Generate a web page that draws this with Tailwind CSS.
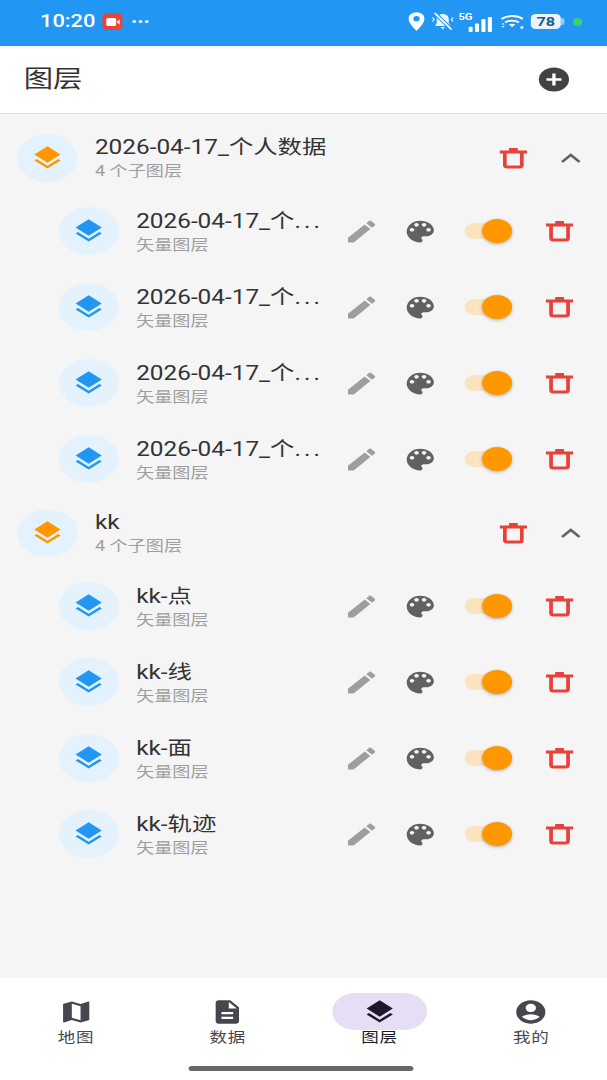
<!DOCTYPE html>
<html lang="zh">
<head>
  <meta charset="UTF-8">
  <meta name="viewport" content="width=device-width, initial-scale=1.0">
  <title>图层</title>
  <script src="https://cdn.jsdelivr.net/npm/@tailwindcss/browser@4"></script>
</head>
<body class="bg-white overflow-hidden">
  <!-- the capture is stretched sideways, so the whole app is laid out narrow and scaled -->
  <div class="w-[486px] h-[1080px] origin-top-left scale-x-[1.249] flex flex-col font-[Roboto,'Noto_Sans_CJK_SC',sans-serif] text-[#333]">
    <div class="h-[46px] shrink-0 bg-[#2196f3] flex items-center pl-[32px] pr-[20px] pb-[3px] text-white">
      <span class="text-[17.5px] font-medium leading-none w-[44px]">10:20</span>
      <span class="ml-[6px] w-[16px] h-[17px] rounded-[4px] bg-[#ef4136] flex items-center justify-center">
        <svg width="11" height="8" viewBox="0 0 11 8"><rect width="8" height="8" rx="1.5" fill="#fff"/><path d="M8.5 3.5L11 1.5v5L8.5 4.5z" fill="#fff"/></svg>
      </span>
      <span class="ml-[8px] flex gap-[2px]"><i class="w-[3px] h-[3px] rounded-full bg-white/90"></i><i class="w-[3px] h-[3px] rounded-full bg-white/90"></i><i class="w-[3px] h-[3px] rounded-full bg-white/90"></i></span>
      <div class="ml-auto flex items-center">
        <svg width="13" height="19" viewBox="0 0 14 20" fill="#fff"><path fill-rule="evenodd" d="M7 0C3.1 0 0 3.1 0 7c0 5 7 13 7 13s7-8 7-13c0-3.900-3.100-7-7-7zm0 4.200a2.800 2.800 0 110 5.600 2.800 2.800 0 010-5.600z"/></svg>
        <svg class="ml-[5px]" width="19" height="19" viewBox="0 0 19 18" fill="#fff" fill-opacity=".92"><path d="M9.500 1.500c-3 0-4.800 2.300-4.800 5.200v3.800L3.300 13.500h12.400l-1.400-3V6.700c0-2.900-1.800-5.200-4.800-5.200zM7.800 14.500h3.400l-1.700 2.500z"/><path d="M3 .5L16.500 17" stroke="#2196f3" stroke-width="3.500"/><path d="M3 .5L16.500 17" stroke="#fff" stroke-width="1.600"/><path d="M1.200 5l1.500 2-1.500 2M17.800 5l-1.500 2 1.500 2" fill="none" stroke="#fff" stroke-width="1"/></svg>
        <div class="ml-[3px] relative w-[27px] h-[20px]">
          <span class="absolute left-0 top-0 text-[9px] font-bold leading-[10px]">5G</span>
          <svg class="absolute right-0 bottom-0" width="19" height="15" viewBox="0 0 20 16" fill="#fff"><rect x="0" y="10.500" width="3.500" height="5.500" rx=".8"/><rect x="5.500" y="7" width="3.500" height="9" rx=".8"/><rect x="11" y="2" width="3.500" height="14" rx=".8"/><rect x="16.500" y="0" width="3.500" height="16" rx=".8"/></svg>
        </div>
        <svg class="ml-[6px]" width="20" height="15" viewBox="0 0 20 15" fill="none" stroke="#fff" stroke-width="1.800"><path d="M1.500 5C6 1 14 1 18.500 5"/><path d="M4.500 8.500c3-2.600 8-2.600 11 0"/><path d="M10 13l-2.600-2.400c1.500-1 3.700-1 5.200 0z" fill="#fff" stroke="none"/><path d="M1.500 10.500l1.300-1.500 1.300 1.500zM1.500 12h2.600l-1.300 1.500zM16.500 13.500a1.300 1.300 0 102.600 0 1.300 1.300 0 10-2.600 0" fill="#fff" stroke="none"/></svg>
        <div class="ml-[5px] flex items-center">
          <span class="w-[24px] h-[15px] rounded-[4px] bg-[#eaf4fe] text-[#1f5c94] text-[13px] font-bold leading-[15px] text-center">78</span>
          <span class="w-[3px] h-[7px] rounded-r-[2px] bg-white/50"></span>
        </div>
        <span class="ml-[7px] w-[7px] h-[8px] rounded-full bg-[#3ed06d]"></span>
      </div>
    </div>

    <div class="h-[68px] shrink-0 bg-white border-b border-[#e0e0e0] flex items-center justify-between pl-[19px] pr-[28px]">
      <span class="text-[23.5px] leading-none">图层</span>
      <svg width="29" height="29" viewBox="0 0 24 24"><circle cx="12" cy="12" r="10" fill="#424242"/><path d="M12 7v10M7 12h10" stroke="#fff" stroke-width="2.200"/></svg>
    </div>

    <div id="list" class="flex-1 bg-[#f5f5f5] pt-[8px]"></div>

    <div class="h-[102px] shrink-0 bg-white relative">
      <div id="nav" class="grid grid-cols-4 pt-[15px]"></div>
      <div class="absolute left-[151px] top-[88px] w-[180px] h-[5px] rounded-full bg-[#666]"></div>
    </div>
  </div>

  <script>
    const icons = {
      layers: 'M11.990 18.540l-7.370-5.730L3 14.070l9 7 9-7-1.630-1.270-7.380 5.740zM12 16l7.360-5.730L21 9l-9-7-9 7 1.630 1.270L12 16z',
      edit: 'M3 17.250V21h3.750L17.810 9.940l-3.750-3.750L3 17.250zM20.710 7.040c.39-.39.39-1.020 0-1.410l-2.340-2.340c-.39-.39-1.020-.39-1.410 0l-1.830 1.830 3.750 3.750 1.830-1.830z',
      palette: 'M12 3c-4.970 0-9 4.030-9 9s4.030 9 9 9c.83 0 1.500-.67 1.500-1.500 0-.39-.15-.74-.39-1.010-.23-.26-.38-.61-.38-.99 0-.83.67-1.500 1.500-1.500H16c2.760 0 5-2.240 5-5 0-4.420-4.030-8-9-8zm-5.500 9c-.83 0-1.500-.67-1.500-1.500S5.670 9 6.500 9 8 9.670 8 10.500 7.330 12 6.500 12zm3-4C8.670 8 8 7.330 8 6.500S8.670 5 9.500 5s1.500.67 1.500 1.500S10.330 8 9.500 8zm5 0c-.83 0-1.500-.67-1.500-1.500S13.670 5 14.500 5s1.500.67 1.500 1.500S15.330 8 14.500 8zm3 4c-.83 0-1.500-.67-1.500-1.500S16.670 9 17.500 9s1.500.67 1.500 1.500-.67 1.500-1.500 1.500z',
      map: 'M20.500 3l-.16.030L15 5.100 9 3 3.360 4.900c-.21.07-.36.25-.36.48V20.500c0 .28.22.5.5.5l.16-.03L9 18.900l6 2.100 5.640-1.900c.21-.07.36-.25.36-.48V3.500c0-.28-.22-.5-.5-.5zM15 19l-6-2.110V5l6 2.110V19z',
      doc: 'M14 2H6c-1.100 0-2 .9-2 2v16c0 1.100.9 2 2 2h12c1.100 0 2-.9 2-2V8l-6-6zm2 16H8v-2h8v2zm0-4H8v-2h8v2zm-3-5V3.500L18.500 9H13z',
      user: 'M12 2C6.480 2 2 6.480 2 12s4.480 10 10 10 10-4.480 10-10S17.520 2 12 2zm0 3c1.930 0 3.500 1.570 3.500 3.500S13.930 12 12 12s-3.500-1.570-3.500-3.500S10.070 5 12 5zm0 14c-2.030 0-4.430-.82-6.140-2.880C7.550 14.800 9.680 14 12 14s4.450.8 6.140 2.120C16.430 18.180 14.030 19 12 19z'
    };
    const svg = (name, size, color) => `<svg width="${size}" height="${size}" viewBox="0 0 24 24" fill="${color}"><path d="${icons[name]}"/></svg>`;
    const trash = `<svg width="22" height="22" viewBox="0 0 22 22" fill="none" stroke="#e8413a" stroke-width="3"><path d="M0 5h22"/><path d="M7.500 1h7v3h-7z" fill="#e8413a" stroke="none"/><path d="M4.200 5v13c0 1.300.7 2 2 2h9.600c1.300 0 2-.7 2-2V5"/></svg>`;

    const badge = color => `<div class="w-[48px] h-[48px] rounded-full bg-[#e3f2fd] flex items-center justify-center shrink-0">${svg('layers', 28, color)}</div>`;

    function groupRow(name, count) {
      return `<div class="h-[71px] flex items-center pl-[14px]">
        ${badge('#ff9800')}
        <div class="ml-[14px] w-[280px] pt-[2px]">
          <div class="text-[19.5px] leading-[26px]">${name}</div>
          <div class="mt-[1px] text-[14.5px] leading-[20px] text-[#9e9e9e]">${count}</div>
        </div>
        <div class="absolute left-[400px] w-[22px]">${trash}</div>
        <svg class="absolute left-[448px]" width="18" height="12" viewBox="0 0 18 12" fill="none" stroke="#616161" stroke-width="2.400"><path d="M2 10l7-7 7 7"/></svg>
      </div>`;
    }

    function childRow(name) {
      return `<div class="h-[76px] flex items-center pl-[47px]">
        ${badge('#2196f3')}
        <div class="ml-[14px] w-[149px] pt-[2px]">
          <div class="text-[19.5px] leading-[26px] whitespace-nowrap">${name}</div>
          <div class="mt-[1px] text-[14.5px] leading-[20px] text-[#9e9e9e]">矢量图层</div>
        </div>
        <div class="ml-[17px] w-[29px]">${svg('edit', 29, '#9e9e9e')}</div>
        <div class="ml-[18px] w-[29px]">${svg('palette', 29, '#616161')}</div>
        <div class="ml-[21px] relative w-[38px] h-[24px]">
          <div class="absolute left-0 top-[4px] w-[30px] h-[16px] rounded-full bg-[#fbe3c0]"></div>
          <div class="absolute right-0 top-0 w-[24px] h-[24px] rounded-full bg-[#ff9800] shadow-[0_1px_3px_rgba(0,0,0,0.3)]"></div>
        </div>
        <div class="ml-[27px] w-[22px]">${trash}</div>
      </div>`;
    }

    const cut = '2026-04-17_个<span class="tracking-[2.5px]">...</span>';
    const groups = [
      { name: '2026-04-17_个人数据', layers: [cut, cut, cut, cut] },
      { name: 'kk', layers: ['kk-点', 'kk-线', 'kk-面', 'kk-轨迹'] }
    ];
    document.getElementById('list').innerHTML = groups.map(g =>
      `<div class="relative">${groupRow(g.name, g.layers.length + ' 个子图层')}</div>` + g.layers.map(childRow).join('')
    ).join('');

    const tabs = [['map', '地图'], ['doc', '数据'], ['layers', '图层', true], ['user', '我的']];
    document.getElementById('nav').innerHTML = tabs.map(([icon, label, active]) => `
      <div class="flex flex-col items-center">
        <div class="w-[76px] h-[37px] rounded-full flex items-center justify-center ${active ? 'bg-[#e6def5]' : ''}">${svg(icon, 28, active ? '#1d192b' : '#49454f')}</div>
        <div class="-mt-[3px] text-[14px] leading-[20px] tracking-[0.5px] ${active ? 'text-[#1d192b]' : 'text-[#49454f]'}">${label}</div>
      </div>`).join('');
  </script>
</body>
</html>
